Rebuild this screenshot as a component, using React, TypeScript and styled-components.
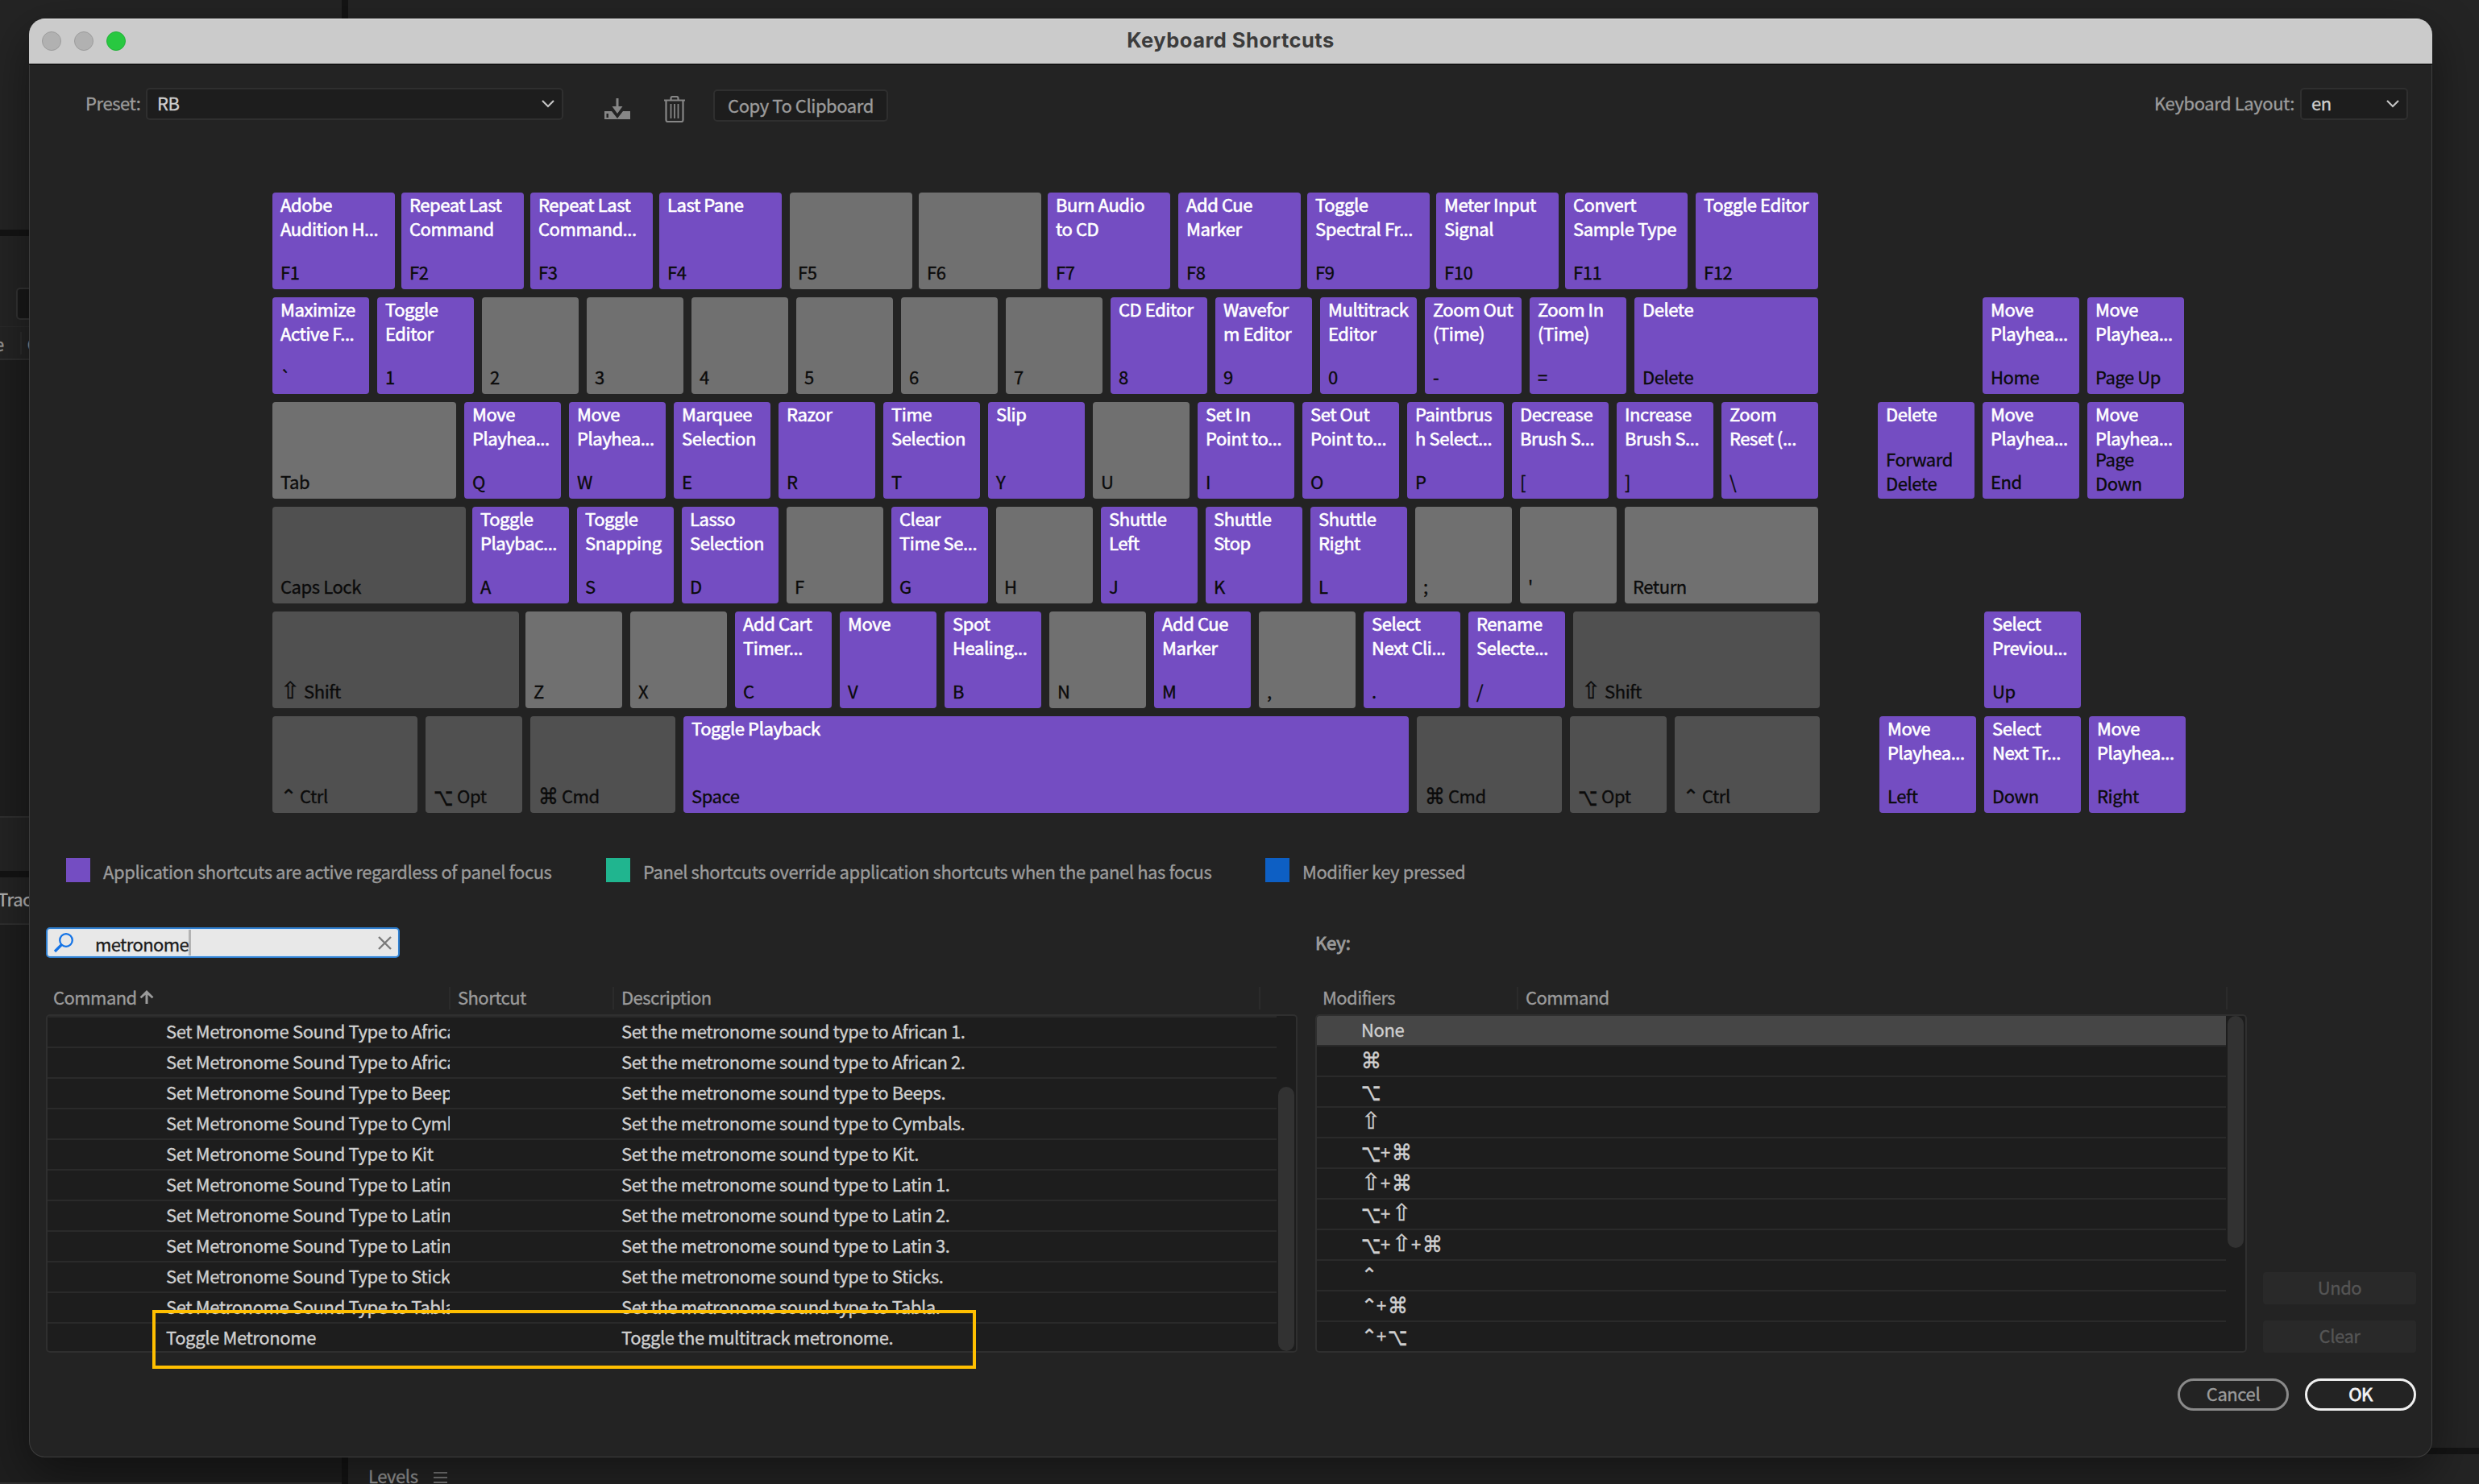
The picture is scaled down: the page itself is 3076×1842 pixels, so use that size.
import { Fragment } from 'react'
import styled, { createGlobalStyle } from 'styled-components'

const colors = {
  app: '#744dc2',
  panel: '#20b58f',
  modifier: '#0d5fc4',
  text: '#9b9b9b',
  bright: '#cfcfcf',
  line: '#2f2f2f',
}

const GlobalStyle = createGlobalStyle`
  * {
    box-sizing: border-box;
  }

  body {
    margin: 0;
    background: #222;
    color: ${colors.text};
    font-family: 'Noto Sans CJK SC', 'Noto Sans', sans-serif;
    font-size: 22px;
    letter-spacing: -0.42px;
    line-height: 30px;
    overflow: hidden;
    -webkit-text-stroke: 0.35px currentColor;
  }
`

/* ---------- workspace behind the dialog ---------- */

const Workspace = styled.div`
  position: relative;
  display: flex;
  width: 3076px;
  height: 1842px;
  overflow: hidden;
  background: #141414;
`

const SidePanels = styled.div`
  display: flex;
  flex-direction: column;
  gap: 8px;
  width: 424px;
  margin-right: 8px;
`

const MainPanels = styled.div`
  display: flex;
  flex-direction: column;
  gap: 8px;
  flex: 1;
`

const Panel = styled.div<{ $height?: number }>`
  ${({ $height }) => ($height ? `height: ${$height}px;` : 'flex: 1;')}
  display: flex;
  flex-direction: column;
  background: #242424;
`

const PanelBody = styled.div`
  flex: 1;
  background: #1e1e1e;
  border-top: 2px solid #2f2f2f;
  border-bottom: 2px solid #2f2f2f;
`

const PanelSearch = styled.div`
  width: 380px;
  height: 40px;
  margin: 64px 0 8px 20px;
  border: 2px solid #333;
  border-radius: 5px;
  background: #191919;
`

const PanelColumns = styled.div`
  display: flex;
  align-items: center;
  height: 40px;
  margin-left: -7px;
  border-top: 1px solid #2a2a2a;
`

const ColumnDivider = styled.span`
  width: 2px;
  height: 28px;
  margin: 0 7px 0 20px;
  background: #2c2c2c;
`

const PanelTab = styled.div`
  height: 57px;
  padding-top: 11px;
  margin-left: -3px;
  color: #b5b5b5;
  white-space: nowrap;
`

const PanelFoot = styled.div`
  height: 66px;
`

const LevelsTab = styled.div`
  display: flex;
  align-items: flex-start;
  gap: 19px;
  height: 37px;
  padding: 11px 0 0 25px;
  color: #989898;
  line-height: 30px;
`

const Hamburger = styled.div`
  width: 17px;
  height: 14px;
  margin-top: 11px;
  border-top: 2px solid #777;
  border-bottom: 2px solid #777;

  &::before {
    content: '';
    display: block;
    height: 2px;
    margin-top: 4px;
    background: #777;
  }
`

/* ---------- dialog ---------- */

const Dialog = styled.div`
  position: absolute;
  left: 36px;
  top: 23px;
  width: 2982px;
  height: 1786px;
  overflow: hidden;
  border-radius: 20px;
  background: #232323;
  box-shadow: 0 20px 60px rgba(0, 0, 0, 0.45), inset 0 0 0 1px #3d3d3d;
`

const TitleBar = styled.div`
  display: flex;
  align-items: center;
  justify-content: center;
  position: relative;
  height: 57px;
  padding-bottom: 3px;
  background: #cbcbcb;
  border-top: 1px solid #e4e4e4;
  border-bottom: 1px solid #000;
  color: #3c3c3c;
  font-family: Inter, sans-serif;
  font-size: 25.5px;
  font-weight: 700;
  letter-spacing: 0.5px;
  -webkit-text-stroke: 0;
`

const Lights = styled.div`
  position: absolute;
  left: 16px;
  top: 15px;
  display: flex;
  gap: 16px;
`

const Light = styled.span<{ $on?: boolean }>`
  width: 24px;
  height: 24px;
  border-radius: 50%;
  border: 1px solid ${({ $on }) => ($on ? '#24b13a' : '#9c9c9c')};
  background: ${({ $on }) => ($on ? '#28c840' : '#b1b1b1')};
`

const Body = styled.div`
  padding: 29px 20px 0 21px;
`

const Toolbar = styled.div`
  display: flex;
  height: 42px;
  padding: 0 10px 0 49px;
`

const Label = styled.span<{ $width?: number }>`
  width: ${({ $width }) => ($width ? `${$width}px` : 'auto')};
  height: 40px;
  line-height: 37px;
  margin-right: 7px;
  white-space: nowrap;
`

const Select = styled.div<{ $width: number }>`
  display: flex;
  justify-content: space-between;
  width: ${({ $width }) => $width}px;
  height: 40px;
  padding: 0 8px 0 12px;
  border: 2px solid ${colors.line};
  border-radius: 5px;
  background: #1d1d1d;
  color: ${colors.bright};
  line-height: 33px;

  svg {
    margin-top: 12px;
  }
`

const IconGroup = styled.div`
  display: flex;
  align-items: flex-start;
  gap: 42px;
  width: 186px;
  padding: 10px 0 0 51px;
`

const OutlineButton = styled.div`
  width: 217px;
  height: 40px;
  margin-top: 2px;
  border: 2px solid ${colors.line};
  border-radius: 5px;
  background: #1d1d1d;
  line-height: 34px;
  text-align: center;
  white-space: nowrap;
`

const Spacer = styled.div`
  flex: 1;
`

/* ---------- keyboard ---------- */

const Keyboard = styled.div`
  display: flex;
  margin: 88px 0 0 281px;
`

const Cluster = styled.div<{ $width?: number }>`
  display: flex;
  flex-direction: column;
  gap: 10px;
  width: ${({ $width }) => ($width ? `${$width}px` : 'auto')};
`

const KeyRow = styled.div<{ $indent?: number }>`
  display: flex;
  height: 120px;
  padding-left: ${({ $indent }) => $indent ?? 0}px;
`

const keyFill = { app: colors.app, plain: '#707070', mod: '#505050' }

const KeyCap = styled.div<{ $width: number; $gap: number; $kind: keyof typeof keyFill }>`
  display: flex;
  flex-direction: column;
  flex: none;
  width: ${({ $width }) => $width}px;
  margin-right: ${({ $gap }) => $gap}px;
  padding: 0 0 7px 10px;
  border-radius: 4px;
  background: ${({ $kind }) => keyFill[$kind]};
  white-space: pre;
`

const KeyAction = styled.div`
  margin: -1px 0 -8px;
  color: #fff;
  -webkit-text-stroke: 0.6px #fff;
`

const KeyName = styled.div<{ $double: boolean }>`
  margin-top: auto;
  margin-bottom: ${({ $double }) => ($double ? -2 : 0)}px;
  color: #0b0b0b;
`

const Symbol = styled.span<{ $width: number; $size: number; $stretch: number }>`
  display: inline-block;
  width: ${({ $width }) => $width}px;
  font-family: 'DejaVu Sans', sans-serif;
  font-size: ${({ $size }) => $size}px;
  letter-spacing: 0;
  line-height: 20px;
  transform: scaleY(${({ $stretch }) => $stretch});
`

/* ---------- legend ---------- */

const Legend = styled.div`
  display: flex;
  margin: 56px 0 0 25px;
`

const LegendItem = styled.div<{ $color: string; $width: number }>`
  display: flex;
  gap: 16px;
  width: ${({ $width }) => $width}px;
  height: 30px;
  line-height: 33px;
  white-space: nowrap;

  &::before {
    content: '';
    width: 30px;
    height: 30px;
    background: ${({ $color }) => $color};
  }
`

/* ---------- tables ---------- */

const Lower = styled.div`
  display: flex;
  margin-top: 56px;
`

const Pane = styled.div<{ $width: number; $gap: number }>`
  width: ${({ $width }) => $width}px;
  margin-right: ${({ $gap }) => $gap}px;
`

const SearchField = styled.div`
  display: flex;
  align-items: center;
  width: 439px;
  height: 38px;
  padding: 0 8px 0 7px;
  border: 2px solid #2f7fd0;
  border-radius: 5px;
  background: #e8e8e8;
  box-shadow: inset 0 0 0 1px #d5e6f7;
  color: #1c1c1c;
`

const SearchText = styled.span`
  margin-left: 26px;
  padding-top: 2px;
  letter-spacing: -0.6px;
  line-height: 30px;
`

const Caret = styled.span`
  width: 3px;
  height: 32px;
  background: #b3b3b3;
`

const KeyHeading = styled.div`
  height: 38px;
  padding-top: 3px;
  letter-spacing: 0;
  -webkit-text-stroke: 0.9px currentColor;
`

const HeaderRow = styled.div`
  display: flex;
  height: 28px;
  margin: 36px 0 6px;
  line-height: 24px;
`

const HeaderCell = styled.div<{ $width: number }>`
  display: flex;
  gap: 3px;
  flex: none;
  width: ${({ $width }) => $width}px;
  padding-left: 9px;
  border-right: 2px solid #2b2b2b;
  letter-spacing: -0.55px;
  white-space: nowrap;

  svg {
    margin-top: 4px;
  }
`

const TableFrame = styled.div`
  display: flex;
  height: 420px;
  border: 2px solid ${colors.line};
  border-radius: 5px;
  background: #1d1d1d;
  overflow: hidden;
`

const Rows = styled.div<{ $topLine?: boolean }>`
  flex: 1;
  border-top: ${({ $topLine }) => ($topLine ? '2px solid #2a2a2a' : 'none')};
`

const Row = styled.div<{ $selected?: boolean }>`
  display: flex;
  height: 38px;
  border-bottom: 2px solid #2a2a2a;
  background: ${({ $selected }) => ($selected ? '#464646' : 'transparent')};
  color: ${colors.bright};
  line-height: 33px;
  white-space: nowrap;
`

const CommandCell = styled.div`
  width: 499px;
  margin-right: 213px;
  padding-left: 147px;
  letter-spacing: -0.38px;
  overflow: hidden;
`

const ModifierCell = styled.div`
  height: 34px;
  padding-left: 55px;
`

const Plus = styled.span`
  display: inline-block;
  width: 14px;
`

const Track = styled.div<{ $offset: number; $length: number }>`
  width: 24px;
  padding: ${({ $offset }) => $offset}px 0 0 2px;

  &::before {
    content: '';
    display: block;
    width: 20px;
    height: ${({ $length }) => $length}px;
    border-radius: 10px;
    background: #323232;
  }
`

const SideButtons = styled.div`
  display: flex;
  flex-direction: column;
  justify-content: flex-end;
  gap: 20px;
  width: 190px;
`

const DisabledButton = styled.div`
  height: 40px;
  border-radius: 4px;
  background: #292929;
  color: #555;
  line-height: 37px;
  text-align: center;
`

const Footer = styled.div`
  display: flex;
  justify-content: flex-end;
  gap: 20px;
  margin-top: 32px;
`

const PillButton = styled.div<{ $primary?: boolean }>`
  width: 138px;
  height: 40px;
  border: 3px solid ${({ $primary }) => ($primary ? '#efefef' : '#8a8a8a')};
  border-radius: 20px;
  color: ${({ $primary }) => ($primary ? '#f4f4f4' : '#9b9b9b')};
  line-height: 31px;
  text-align: center;
  -webkit-text-stroke: ${({ $primary }) => ($primary ? 0.8 : 0.35)}px currentColor;
`

// annotation drawn over the last table row
const Highlight = styled.div`
  position: absolute;
  left: 189px;
  top: 1626px;
  width: 1022px;
  height: 73px;
  border: 4px solid #ffbf00;
`

type KeyDef = {
  name: string
  action?: string
  w?: number
  gap?: number
  mod?: boolean
  symbol?: string
}

const k = (name: string, action?: string, extra: Partial<KeyDef> = {}): KeyDef => ({ name, action, ...extra })

const F = { w: 152, gap: 8 }
const F_WIDE = { w: 152, gap: 10 }

const MAIN_ROWS: KeyDef[][] = [
  [
    k('F1', 'Adobe\nAudition H...', F),
    k('F2', 'Repeat Last\nCommand', F),
    k('F3', 'Repeat Last\nCommand...', F),
    k('F4', 'Last Pane', F_WIDE),
    k('F5', undefined, F),
    k('F6', undefined, F),
    k('F7', 'Burn Audio\nto CD', F_WIDE),
    k('F8', 'Add Cue\nMarker', F),
    k('F9', 'Toggle\nSpectral Fr...', F),
    k('F10', 'Meter Input\nSignal', F),
    k('F11', 'Convert\nSample Type', F_WIDE),
    k('F12', 'Toggle Editor', F),
  ],
  [
    k('`', 'Maximize\nActive F...'),
    k('1', 'Toggle\nEditor'),
    k('2'),
    k('3'),
    k('4'),
    k('5'),
    k('6'),
    k('7'),
    k('8', 'CD Editor'),
    k('9', 'Wavefor\nm Editor'),
    k('0', 'Multitrack\nEditor'),
    k('-', 'Zoom Out\n(Time)'),
    k('=', 'Zoom In\n(Time)'),
    k('Delete', 'Delete', { w: 228 }),
  ],
  [
    k('Tab', undefined, { w: 228 }),
    k('Q', 'Move\nPlayhea...'),
    k('W', 'Move\nPlayhea...'),
    k('E', 'Marquee\nSelection'),
    k('R', 'Razor'),
    k('T', 'Time\nSelection'),
    k('Y', 'Slip'),
    k('U'),
    k('I', 'Set In\nPoint to...'),
    k('O', 'Set Out\nPoint to...'),
    k('P', 'Paintbrus\nh Select...'),
    k('[', 'Decrease\nBrush S...'),
    k(']', 'Increase\nBrush S...'),
    k('\\', 'Zoom\nReset (...'),
  ],
  [
    k('Caps Lock', undefined, { w: 240, gap: 8, mod: true }),
    k('A', 'Toggle\nPlaybac...'),
    k('S', 'Toggle\nSnapping'),
    k('D', 'Lasso\nSelection'),
    k('F'),
    k('G', 'Clear\nTime Se...'),
    k('H'),
    k('J', 'Shuttle\nLeft'),
    k('K', 'Shuttle\nStop'),
    k('L', 'Shuttle\nRight'),
    k(';'),
    k("'"),
    k('Return', undefined, { w: 240 }),
  ],
  [
    k('Shift', undefined, { w: 306, gap: 8, mod: true, symbol: '⇧' }),
    k('Z'),
    k('X'),
    k('C', 'Add Cart\nTimer...'),
    k('V', 'Move'),
    k('B', 'Spot\nHealing...'),
    k('N'),
    k('M', 'Add Cue\nMarker'),
    k(','),
    k('.', 'Select\nNext Cli...'),
    k('/', 'Rename\nSelecte...'),
    k('Shift', undefined, { w: 306, mod: true, symbol: '⇧' }),
  ],
  [
    k('Ctrl', undefined, { w: 180, mod: true, symbol: '⌃' }),
    k('Opt', undefined, { mod: true, symbol: '⌥' }),
    k('Cmd', undefined, { w: 180, mod: true, symbol: '⌘' }),
    k('Space', 'Toggle Playback', { w: 900 }),
    k('Cmd', undefined, { w: 180, mod: true, symbol: '⌘' }),
    k('Opt', undefined, { mod: true, symbol: '⌥' }),
    k('Ctrl', undefined, { w: 180, mod: true, symbol: '⌃' }),
  ],
]

const NAV_ROWS: { indent: number; keys: KeyDef[] }[] = [
  { indent: 0, keys: [] },
  { indent: 130, keys: [k('Home', 'Move\nPlayhea...'), k('Page Up', 'Move\nPlayhea...')] },
  {
    indent: 0,
    keys: [k('Forward\nDelete', 'Delete'), k('End', 'Move\nPlayhea...'), k('Page\nDown', 'Move\nPlayhea...')],
  },
  { indent: 0, keys: [] },
  { indent: 132, keys: [k('Up', 'Select\nPreviou...')] },
  {
    indent: 2,
    keys: [k('Left', 'Move\nPlayhea...'), k('Down', 'Select\nNext Tr...'), k('Right', 'Move\nPlayhea...')],
  },
]

const COMMANDS = [
  ['Set Metronome Sound Type to African 1', 'Set the metronome sound type to African 1.'],
  ['Set Metronome Sound Type to African 2', 'Set the metronome sound type to African 2.'],
  ['Set Metronome Sound Type to Beeps', 'Set the metronome sound type to Beeps.'],
  ['Set Metronome Sound Type to Cymbals', 'Set the metronome sound type to Cymbals.'],
  ['Set Metronome Sound Type to Kit', 'Set the metronome sound type to Kit.'],
  ['Set Metronome Sound Type to Latin 1', 'Set the metronome sound type to Latin 1.'],
  ['Set Metronome Sound Type to Latin 2', 'Set the metronome sound type to Latin 2.'],
  ['Set Metronome Sound Type to Latin 3', 'Set the metronome sound type to Latin 3.'],
  ['Set Metronome Sound Type to Sticks', 'Set the metronome sound type to Sticks.'],
  ['Set Metronome Sound Type to Tabla', 'Set the metronome sound type to Tabla.'],
  ['Toggle Metronome', 'Toggle the multitrack metronome.'],
]

const MODIFIERS = ['⌘', '⌥', '⇧', '⌥⌘', '⇧⌘', '⌥⇧', '⌥⇧⌘', '⌃', '⌃⌘', '⌃⌥']

// the fallback font draws each modifier at its own scale, so they are evened out here
const SYMBOLS: Record<string, { size: number; stretch: number; width: number }> = {
  '⌘': { size: 25, stretch: 1.1, width: 24 },
  '⌥': { size: 21, stretch: 1.45, width: 24 },
  '⇧': { size: 29, stretch: 1, width: 24 },
  '⌃': { size: 24, stretch: 1, width: 19 },
}

function ModifierSymbol({ symbol, space = 0 }: { symbol: string; space?: number }) {
  const { size, stretch, width } = SYMBOLS[symbol]
  return (
    <Symbol $width={width + space} $size={size} $stretch={stretch}>
      {symbol}
    </Symbol>
  )
}

function Key({ def }: { def: KeyDef }) {
  const kind = def.action ? 'app' : def.mod ? 'mod' : 'plain'
  return (
    <KeyCap $width={def.w ?? 120} $gap={def.gap ?? 10} $kind={kind}>
      {def.action && <KeyAction>{def.action}</KeyAction>}
      <KeyName $double={def.name.includes('\n')}>
        {def.symbol && <ModifierSymbol symbol={def.symbol} space={5} />}
        {def.name}
      </KeyName>
    </KeyCap>
  )
}

function Chevron() {
  return (
    <svg width="18" height="12" viewBox="0 0 18 12" fill="none" stroke="#c4c4c4" strokeWidth="2.2">
      <path d="M2 2l7 7 7-7" />
    </svg>
  )
}

export default function App() {
  return (
    <>
      <GlobalStyle />
      <Workspace>
        <SidePanels>
          <Panel $height={285} />
          <Panel $height={788}>
            <PanelSearch />
            <PanelColumns>
              <span>e</span>
              <ColumnDivider />
              <span>C</span>
            </PanelColumns>
            <PanelBody />
            <PanelFoot />
          </Panel>
          <Panel>
            <PanelTab>Trac</PanelTab>
            <PanelBody />
          </Panel>
        </SidePanels>
        <MainPanels>
          <Panel $height={1797} />
          <Panel>
            <LevelsTab>
              Levels
              <Hamburger />
            </LevelsTab>
          </Panel>
        </MainPanels>

        <Dialog>
          <TitleBar>
            <Lights>
              <Light />
              <Light />
              <Light $on />
            </Lights>
            Keyboard Shortcuts
          </TitleBar>
          <Body>
            <Toolbar>
              <Label $width={68}>Preset:</Label>
              <Select $width={518}>
                RB
                <Chevron />
              </Select>
              <IconGroup>
                <svg width="32" height="32" viewBox="0 0 32 32" fill="#868686">
                  <path d="M14.5 3h3v10h5L16 22l-6.500-9h5z" />
                  <path d="M0 19h9l7 9 7-9h9v10H0zM2.500 22v5H5v-5z" fillRule="evenodd" />
                </svg>
                <svg width="26" height="33" viewBox="0 0 26 33" fill="none" stroke="#868686" strokeWidth="2.200">
                  <path d="M0 5.500h26M8.500 5V3q0-2 2-2h5q2 0 2 2v2M2.500 6v24q0 2 2 2h17q2 0 2-2V6" />
                  <path d="M8.500 10v18M13 10v18M17.500 10v18" strokeWidth="1.800" />
                </svg>
              </IconGroup>
              <OutlineButton>Copy To Clipboard</OutlineButton>
              <Spacer />
              <Label>Keyboard Layout:</Label>
              <Select $width={134}>
                en
                <Chevron />
              </Select>
            </Toolbar>

            <Keyboard>
              <Cluster $width={1992}>
                {MAIN_ROWS.map((keys, i) => (
                  <KeyRow key={i}>
                    {keys.map((def, j) => (
                      <Key key={j} def={def} />
                    ))}
                  </KeyRow>
                ))}
              </Cluster>
              <Cluster>
                {NAV_ROWS.map((row, i) => (
                  <KeyRow key={i} $indent={row.indent}>
                    {row.keys.map((def) => (
                      <Key key={def.name} def={def} />
                    ))}
                  </KeyRow>
                ))}
              </Cluster>
            </Keyboard>

            <Legend>
              <LegendItem $color={colors.app} $width={670}>
                Application shortcuts are active regardless of panel focus
              </LegendItem>
              <LegendItem $color={colors.panel} $width={818}>
                Panel shortcuts override application shortcuts when the panel has focus
              </LegendItem>
              <LegendItem $color={colors.modifier} $width={300}>
                Modifier key pressed
              </LegendItem>
            </Legend>

            <Lower>
              <Pane $width={1553} $gap={22}>
                <SearchField>
                  <svg width="26" height="26" viewBox="0 0 26 26" fill="none" stroke="#1473e6" strokeWidth="2.300">
                    <circle cx="16" cy="10" r="7.800" />
                    <path d="M10.500 15.500L2 24" strokeWidth="3.200" />
                  </svg>
                  <SearchText>metronome</SearchText>
                  <Caret />
                  <Spacer />
                  <svg width="17" height="17" viewBox="0 0 17 17" stroke="#7a7a7a" strokeWidth="2.400">
                    <path d="M1 1l15 15M16 1L1 16" />
                  </svg>
                </SearchField>
                <HeaderRow>
                  <HeaderCell $width={502}>
                    Command
                    <svg width="18" height="18" viewBox="0 0 18 18" fill="#9b9b9b">
                      <path d="M9 0l8.500 8.500-2 1.800-5-4.600V17h-3V5.700l-5 4.600-2-1.800z" />
                    </svg>
                  </HeaderCell>
                  <HeaderCell $width={203}>Shortcut</HeaderCell>
                  <HeaderCell $width={802}>Description</HeaderCell>
                </HeaderRow>
                <TableFrame>
                  <Rows $topLine>
                    {COMMANDS.map(([command, description]) => (
                      <Row key={command}>
                        <CommandCell>{command}</CommandCell>
                        {description}
                      </Row>
                    ))}
                  </Rows>
                  <Track $offset={88} $length={328} />
                </TableFrame>
              </Pane>

              <Pane $width={1156} $gap={20}>
                <KeyHeading>Key:</KeyHeading>
                <HeaderRow>
                  <HeaderCell $width={252}>Modifiers</HeaderCell>
                  <HeaderCell $width={880}>Command</HeaderCell>
                </HeaderRow>
                <TableFrame>
                  <Rows>
                    <Row $selected>
                      <ModifierCell>None</ModifierCell>
                    </Row>
                    {MODIFIERS.map((combo) => (
                      <Row key={combo}>
                        <ModifierCell>
                          {[...combo].map((symbol, i) => (
                            <Fragment key={symbol}>
                              {i > 0 && <Plus>+</Plus>}
                              <ModifierSymbol symbol={symbol} />
                            </Fragment>
                          ))}
                        </ModifierCell>
                      </Row>
                    ))}
                  </Rows>
                  <Track $offset={0} $length={288} />
                </TableFrame>
              </Pane>

              <SideButtons>
                <DisabledButton>Undo</DisabledButton>
                <DisabledButton>Clear</DisabledButton>
              </SideButtons>
            </Lower>

            <Footer>
              <PillButton>Cancel</PillButton>
              <PillButton $primary>OK</PillButton>
            </Footer>
          </Body>
        </Dialog>
        <Highlight />
      </Workspace>
    </>
  )
}
